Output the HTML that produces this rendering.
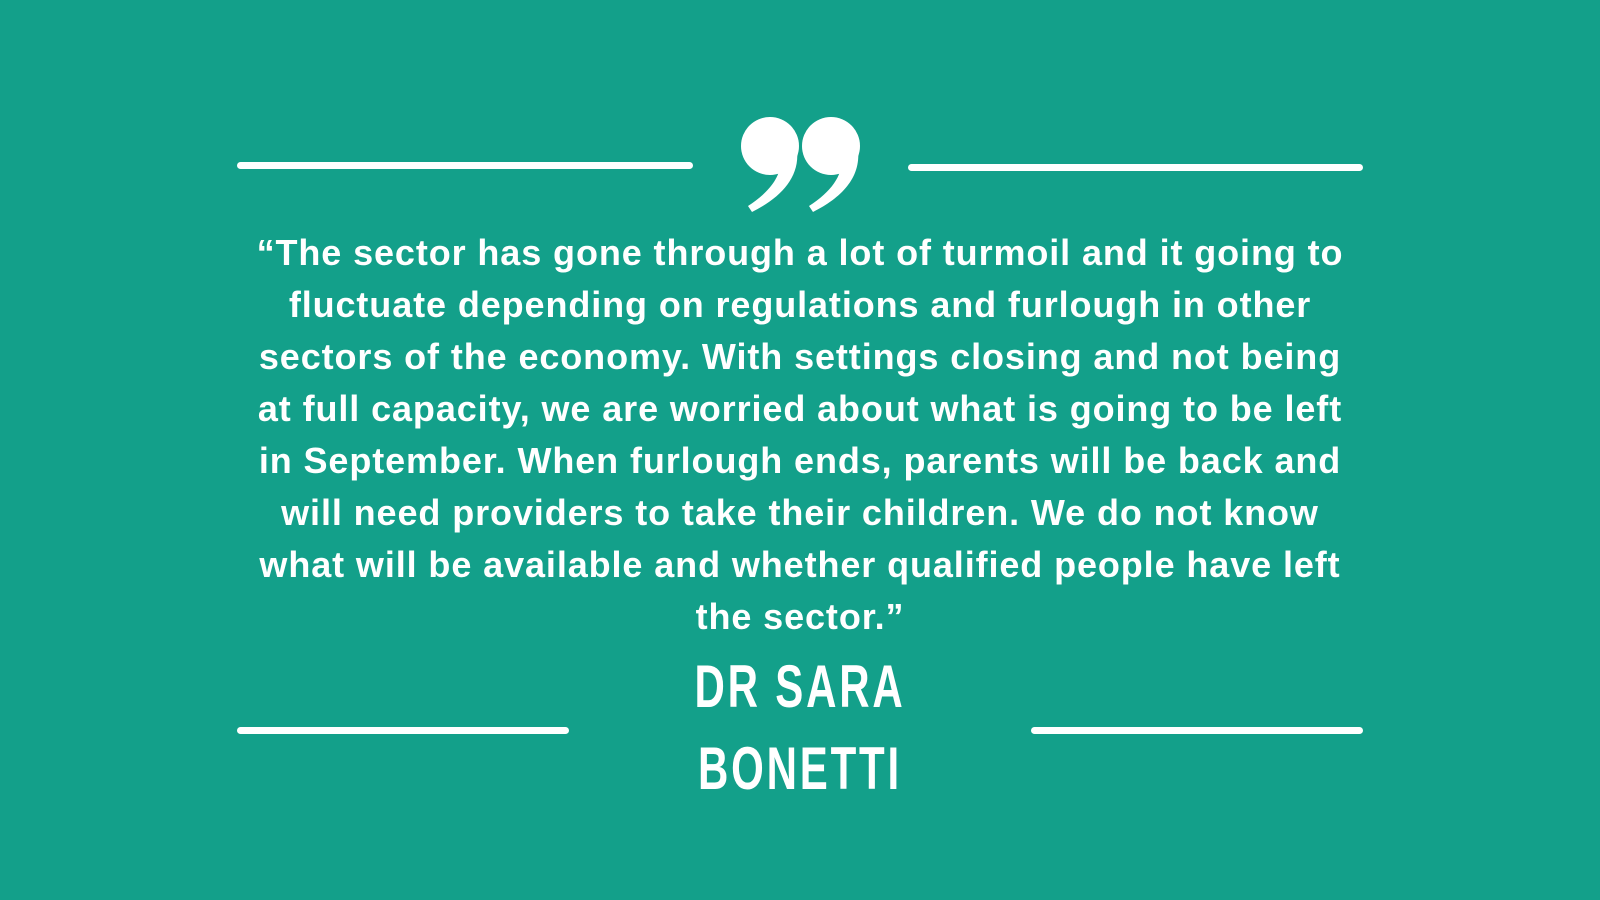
<!DOCTYPE html>
<html><head><meta charset="utf-8"><style>
html,body{margin:0;padding:0}
body{width:1600px;height:900px;background:#13a08a;position:relative;overflow:hidden;font-family:"Liberation Sans",sans-serif;color:#fff}
.l{position:absolute;height:7px;background:#fff;border-radius:4px}
.q{position:absolute;left:0;width:1600px;top:227px;text-align:center;font-weight:bold;font-size:36px;line-height:52px;letter-spacing:0.9px}
.n{position:absolute;left:0;width:1600px;text-align:center;font-weight:bold;font-size:60px;letter-spacing:4px;line-height:62px;transform:scaleX(0.7);transform-origin:800px 0}
</style></head><body>
<div class="l" style="left:237px;top:162px;width:456px"></div>
<div class="l" style="left:908px;top:164px;width:455px"></div>
<div class="l" style="left:237px;top:727px;width:332px"></div>
<div class="l" style="left:1031px;top:727px;width:332px"></div>
<svg style="position:absolute;left:0;top:0" width="1600" height="900">
<g fill="#fff">
<circle cx="770" cy="146" r="29"/>
<path d="M797 150 C800 178 780 198 752 212 L748 206 C770 192 782 175 780 160 Z"/>
<circle cx="831" cy="146" r="29"/>
<path d="M858 150 C861 178 841 198 813 212 L809 206 C831 192 843 175 841 160 Z"/>
</g></svg>
<div class="q">“The sector has gone through a lot of turmoil and it going to<br>fluctuate depending on regulations and furlough in other<br>sectors of the economy. With settings closing and not being<br>at full capacity, we are worried about what is going to be left<br>in September. When furlough ends, parents will be back and<br>will need providers to take their children. We do not know<br>what will be available and whether qualified people have left<br>the sector.”</div>
<div class="n" style="top:656px">DR SARA</div>
<div class="n" style="top:738px">BONETTI</div>
</body></html>
